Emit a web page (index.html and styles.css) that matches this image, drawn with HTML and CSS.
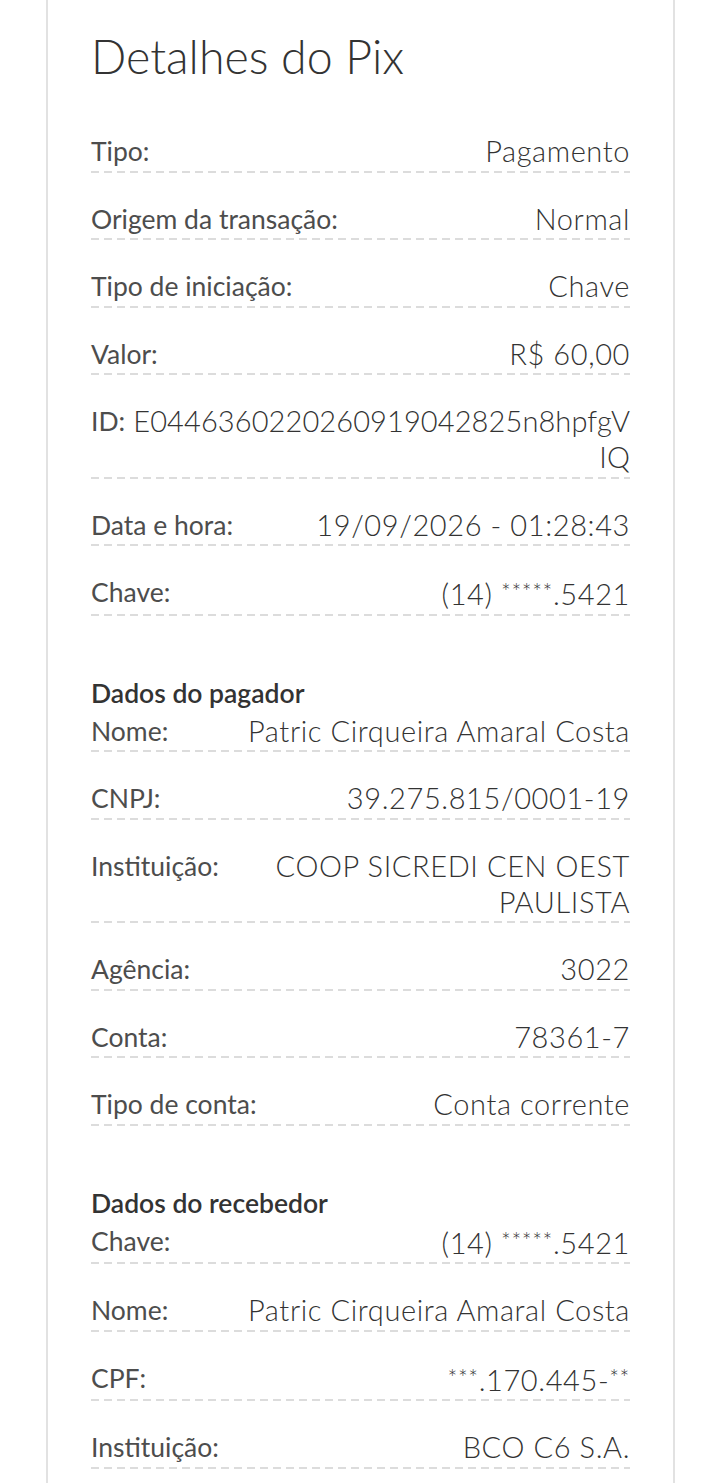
FILE: index.html
```html
<!DOCTYPE html>
<html lang="pt-BR">
<head>
<meta charset="UTF-8">
<meta name="viewport" content="width=device-width, initial-scale=1.0">
<link rel="stylesheet" href="styles.css">
<title>Detalhes do Pix</title>
</head>
<body>

<div id="card">
  <h1 class="title">Detalhes do Pix</h1>

  <div class="group">
    <div class="row"><span class="label">Tipo:</span><span class="value">Pagamento</span></div>
    <div class="row"><span class="label">Origem da transação:</span><span class="value">Normal</span></div>
    <div class="row"><span class="label">Tipo de iniciação:</span><span class="value">Chave</span></div>
    <div class="row"><span class="label">Valor:</span><span class="value">R$ 60,00</span></div>
    <div class="row"><span class="label short">ID:</span><span class="value code">E0446360220260919042825n8hpfgV<br>IQ</span></div>
    <div class="row"><span class="label">Data e hora:</span><span class="value">19/09/2026 - 01:28:43</span></div>
    <div class="row"><span class="label">Chave:</span><span class="value">(14) <span class="mask">*****</span>.5421</span></div>
  </div>

  <div class="group">
    <h2>Dados do pagador</h2>
    <div class="row"><span class="label">Nome:</span><span class="value">Patric Cirqueira Amaral Costa</span></div>
    <div class="row"><span class="label">CNPJ:</span><span class="value">39.275.815/0001-19</span></div>
    <div class="row"><span class="label">Instituição:</span><span class="value">COOP SICREDI CEN OEST PAULISTA</span></div>
    <div class="row"><span class="label">Agência:</span><span class="value">3022</span></div>
    <div class="row"><span class="label">Conta:</span><span class="value">78361-7</span></div>
    <div class="row"><span class="label">Tipo de conta:</span><span class="value">Conta corrente</span></div>
  </div>

  <div class="group">
    <h2>Dados do recebedor</h2>
    <div class="row"><span class="label">Chave:</span><span class="value">(14) <span class="mask">*****</span>.5421</span></div>
    <div class="row"><span class="label">Nome:</span><span class="value">Patric Cirqueira Amaral Costa</span></div>
    <div class="row"><span class="label">CPF:</span><span class="value"><span class="mask">***</span>.170.445-<span class="mask">**</span></span></div>
    <div class="row"><span class="label">Instituição:</span><span class="value">BCO C6 S.A.</span></div>
  </div>
</div>

</body>
</html>
```

FILE: styles.css
```css
body {
  margin: 0;
  background-color: #fff;
  font-family: Lato, "Liberation Sans", sans-serif;
  color: #333;
}
#card {
  margin: 0 45px 0 46px;
  padding: 30px 43px 40px;
  min-height: 1483px;
  box-sizing: border-box;
  border-left: 2px solid #e2e2e2;
  border-right: 2px solid #e2e2e2;
  background-color: #fff;
}
.title {
  margin: 0 0 23px;
  font-size: 46.5px;
  line-height: 52px;
  font-weight: 300;
  color: #333;
}
.group h2 {
  margin: 59px 0 0;
  font-size: 26.5px;
  line-height: 36px;
  font-weight: 600;
  color: #333;
}
.row {
  display: flex;
  justify-content: space-between;
  align-items: flex-start;
  padding: 28px 0 3.5px;
  line-height: 36px;
  background-image: repeating-linear-gradient(to right, #dcdcdc 0 8px, transparent 8px 13px);
  background-size: 100% 2px;
  background-position: left bottom;
  background-repeat: no-repeat;
}
.group h2 + .row {
  padding-top: 2px;
}
.label {
  font-size: 26.5px;
  font-weight: 400;
  color: #4d4d4d;
  white-space: nowrap;
  margin-right: 14px;
}
.label.short {
  margin-right: 6px;
}
.value {
  font-size: 29px;
  font-weight: 300;
  letter-spacing: 0.6px;
  text-align: right;
}
.value.code {
  letter-spacing: 0.1px;
}
.mask {
  font-size: 23px;
  vertical-align: 4px;
}
```
